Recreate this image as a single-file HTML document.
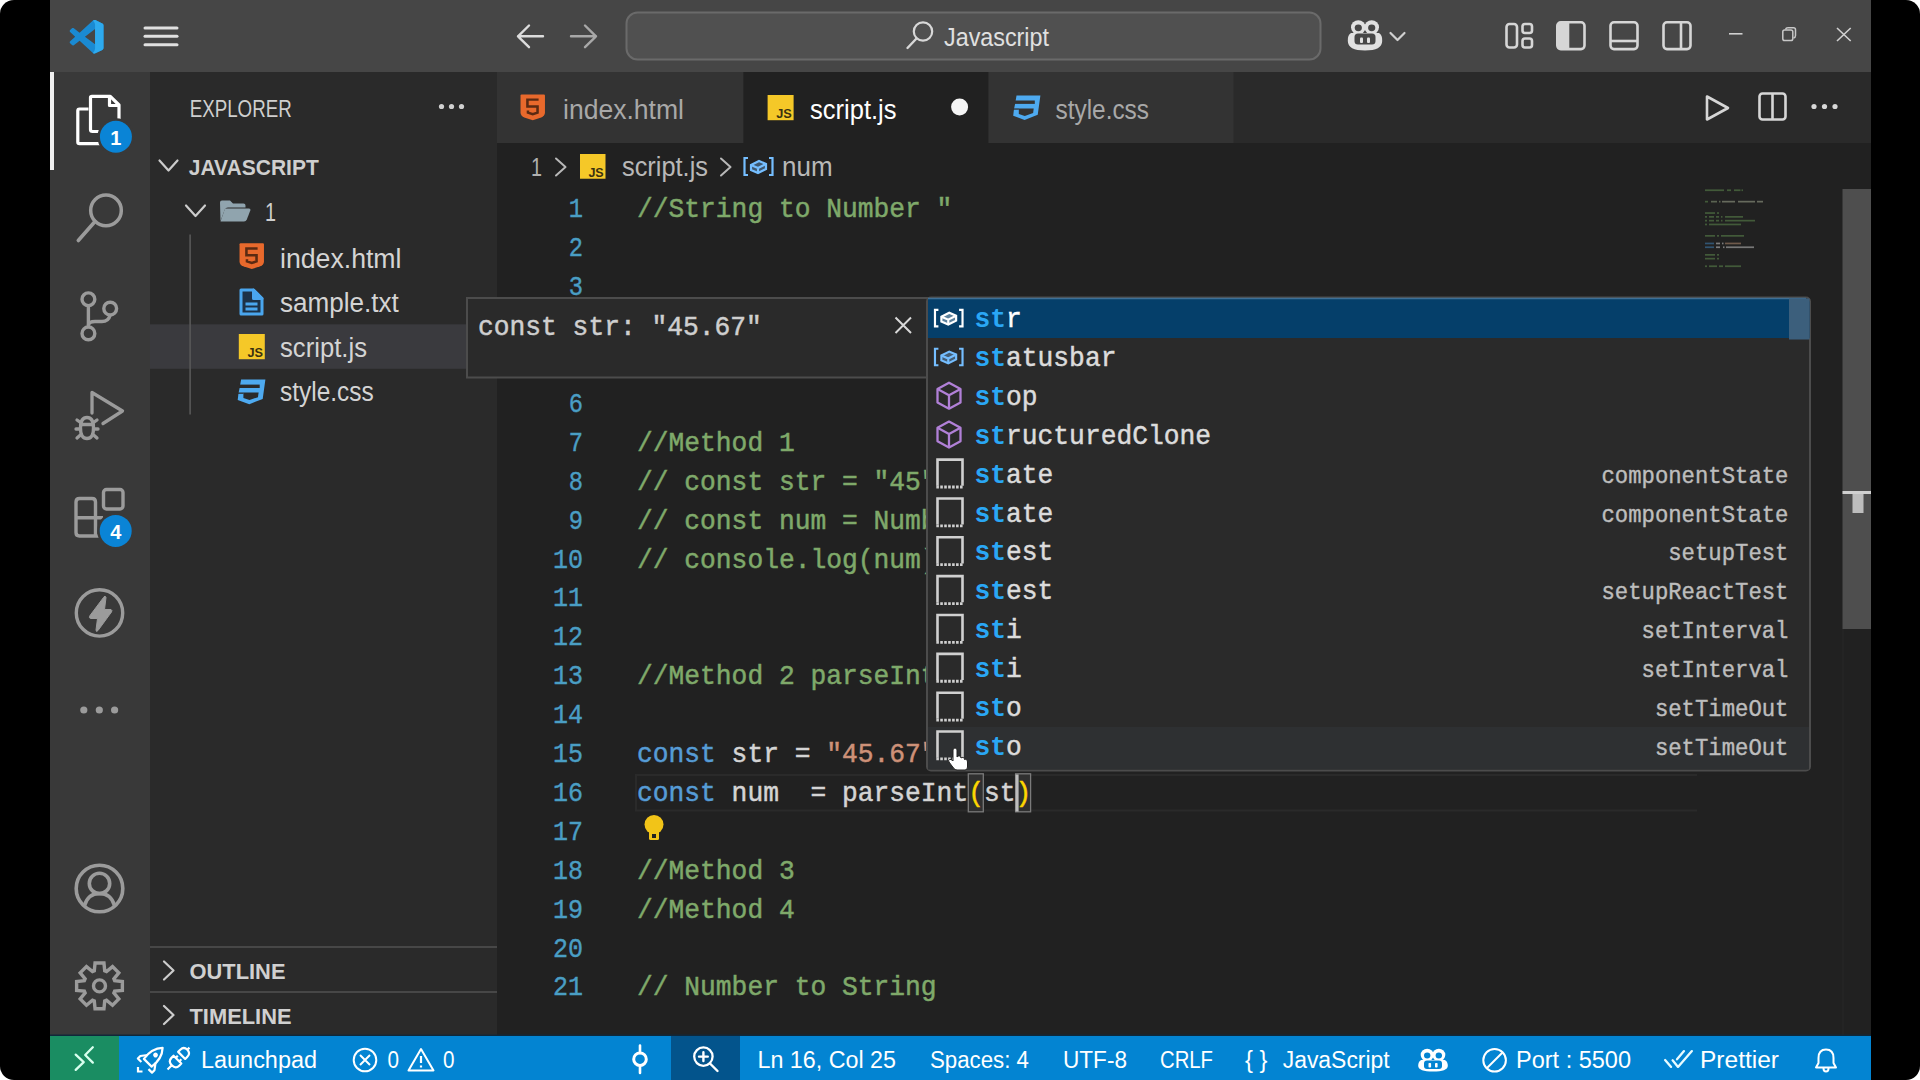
<!DOCTYPE html>
<html><head><meta charset="utf-8"><title>VS Code</title>
<style>html,body{margin:0;padding:0;background:#fff;width:1920px;height:1080px;overflow:hidden}svg{display:block}text{white-space:pre}</style>
</head><body>
<svg width="1920" height="1080" viewBox="0 0 1920 1080" xml:space="preserve">
<rect x="0" y="0" width="1920" height="1080" fill="#ffffff" />
<rect x="0" y="0" width="1920" height="1080" fill="#000000" rx="14" />
<rect x="50" y="0" width="1821" height="72" fill="#464646" />
<g transform="translate(69.7,19.8) scale(0.338)">
<path d="M96.46 10.8 L75.86 0.87 C73.48 -0.28 70.63 0.2 68.76 2.07 L29.34 38.04 L12.17 25.01 C10.57 23.79 8.33 23.89 6.85 25.25 L1.34 30.26 C-0.48 31.91 -0.48 34.77 1.33 36.42 L16.22 50 L1.33 63.58 C-0.48 65.23 -0.48 68.09 1.34 69.74 L6.85 74.75 C8.33 76.11 10.57 76.21 12.17 74.99 L29.34 61.96 L68.76 97.930 C70.63 99.8 73.48 100.28 75.86 99.13 L96.46 89.2 C98.62 88.16 100 85.96 100 83.56 V16.44 C100 14.04 98.62 11.84 96.46 10.8 Z M75.02 72.7 L45.11 50 L75.02 27.3 V72.7 Z" fill="#1a8ad2" fill-rule="evenodd"/>
<path d="M68.76 2.07 C70.63 0.2 73.48 -0.28 75.86 0.87 L96.46 10.8 C98.62 11.84 100 14.04 100 16.44 V83.56 C100 85.96 98.62 88.16 96.46 89.2 L75.86 99.13 C73.48 100.28 70.63 99.8 68.76 97.93 Q75.02 91 75.02 85 V15 Q75.02 9 68.76 2.07 Z" fill="#2eaaee"/>
</g>
<line x1="145" y1="28" x2="177" y2="28" stroke="#e0e0e0" stroke-width="3" stroke-linecap="round"/>
<line x1="145" y1="36.3" x2="177" y2="36.3" stroke="#e0e0e0" stroke-width="3" stroke-linecap="round"/>
<line x1="145" y1="44.8" x2="177" y2="44.8" stroke="#e0e0e0" stroke-width="3" stroke-linecap="round"/>
<path d="M543 36.3 H518 M529 25.5 L518 36.3 L529 47.2" fill="none" stroke="#dcdcdc" stroke-width="2.4" stroke-linecap="round" stroke-linejoin="round"/>
<path d="M571 36.3 H596 M585 25.5 L596 36.3 L585 47.2" fill="none" stroke="#a8a8a8" stroke-width="2.4" stroke-linecap="round" stroke-linejoin="round"/>
<rect x="626.5" y="12.5" width="694" height="47" rx="11" fill="#505050" stroke="#6a6a6a" stroke-width="2"/>
<circle cx="923" cy="31.5" r="9.2" fill="none" stroke="#d8d8d8" stroke-width="2.2"/>
<line x1="916.5" y1="38.5" x2="907.5" y2="48" stroke="#d8d8d8" stroke-width="2.4" stroke-linecap="round"/>
<text x="944" y="46" font-family="Liberation Sans" font-size="25" fill="#e0e0e0" textLength="105" lengthAdjust="spacingAndGlyphs" >Javascript</text>
<g>
<ellipse cx="1358.3" cy="27.3" rx="7.3" ry="7" fill="#e0e0e0"/><ellipse cx="1371.7" cy="27.3" rx="7.3" ry="7" fill="#e0e0e0"/>
<path d="M1351 33 Q1347.5 35 1347.8 41 Q1348 50.5 1365 50.5 Q1382 50.5 1382.2 41 Q1382.5 35 1379 33 Z" fill="#e0e0e0"/>
<ellipse cx="1358.3" cy="27.8" rx="3.6" ry="3.4" fill="#464646"/><ellipse cx="1371.7" cy="27.8" rx="3.6" ry="3.4" fill="#464646"/>
<rect x="1354.5" y="33.5" width="21" height="11" rx="3.5" fill="#464646"/>
<rect x="1360" y="37.5" width="3" height="5.5" rx="1" fill="#e0e0e0"/><rect x="1367" y="37.5" width="3" height="5.5" rx="1" fill="#e0e0e0"/>
</g>
<path d="M1390.5 33 L1397.5 40 L1404.5 33" fill="none" stroke="#d0d0d0" stroke-width="2.2" stroke-linecap="round" stroke-linejoin="round"/>
<rect x="1506.5" y="24" width="10.5" height="23.5" rx="3" stroke="#d6d6d6" stroke-width="2.6" fill="none"/>
<rect x="1522.5" y="24" width="9.5" height="9" rx="2.5" stroke="#d6d6d6" stroke-width="2.6" fill="none"/>
<rect x="1522.5" y="38.5" width="9.5" height="9" rx="2.5" stroke="#d6d6d6" stroke-width="2.6" fill="none"/>
<rect x="1557.3" y="22.3" width="27.2" height="26.8" rx="3.5" stroke="#d6d6d6" stroke-width="2.6" fill="none"/>
<path d="M1557.3 25.5 Q1557.3 22.3 1560.5 22.3 H1569.3 V49.1 H1560.5 Q1557.3 49.1 1557.3 46 Z" fill="#d6d6d6"/>
<rect x="1610.5" y="22.3" width="27" height="26.8" rx="3.5" stroke="#d6d6d6" stroke-width="2.6" fill="none"/>
<line x1="1610.5" y1="41" x2="1637.5" y2="41" stroke="#d6d6d6" stroke-width="2.6" fill="none"/>
<rect x="1663.5" y="22.3" width="27" height="26.8" rx="3.5" stroke="#d6d6d6" stroke-width="2.6" fill="none"/>
<line x1="1681" y1="22.3" x2="1681" y2="49.1" stroke="#d6d6d6" stroke-width="2.6" fill="none"/>
<line x1="1729" y1="33.8" x2="1742.5" y2="33.8" stroke="#d0d0d0" stroke-width="1.6"/>
<rect x="1782.8" y="30" width="10" height="10.5" rx="1.8" fill="none" stroke="#c8c8c8" stroke-width="1.5"/>
<path d="M1785.5 29.5 Q1786 27.8 1788 27.8 H1793.5 Q1795.5 27.8 1795.5 29.8 V35.5 Q1795.5 37.5 1793.5 38" fill="none" stroke="#c8c8c8" stroke-width="1.5"/>
<path d="M1837 28 L1850.7 41 M1850.7 28 L1837 41" stroke="#d0d0d0" stroke-width="1.6"/>
<rect x="50" y="72" width="100" height="964" fill="#393939" />
<rect x="50" y="72" width="4" height="98" fill="#f0f0f0" />
<g fill="none" stroke="#ffffff" stroke-width="3.2" stroke-linejoin="round">
<path d="M88.5 109 H79.5 Q77.8 109 77.8 110.8 V142 Q77.8 143.7 79.5 143.7 H101"/>
<path d="M90.5 97.5 V129.5 Q90.5 131.5 92.5 131.5 H101 M90.5 97.5 Q90.5 96.3 92 96.3 H110.3 L119 105 V121"/>
<path d="M109.5 96.5 V105.5 H118.5"/>
</g>
<circle cx="115.9" cy="136.8" r="18.5" fill="#393939"/>
<circle cx="115.9" cy="136.8" r="16" fill="#0a84d6"/>
<text x="115.9" y="144.5" font-family="Liberation Sans" font-size="20" fill="#ffffff" font-weight="bold" text-anchor="middle" >1</text>
<circle cx="106" cy="210.4" r="15.3" fill="none" stroke="#9b9b9b" stroke-width="3.5"/>
<line x1="95" y1="221.5" x2="78.3" y2="240.5" stroke="#9b9b9b" stroke-width="3.6" stroke-linecap="round"/>
<g fill="none" stroke="#9b9b9b" stroke-width="3.4">
<circle cx="88.4" cy="299.3" r="6.4"/><circle cx="110.2" cy="308.6" r="6.4"/><circle cx="88.4" cy="333.4" r="6.4"/>
<path d="M88.4 305.7 V327"/>
<path d="M88.4 325 Q89 321.5 95 321.5 H102 Q108.5 321.5 110.2 315"/>
</g>
<g fill="none" stroke="#9b9b9b" stroke-width="3.3" stroke-linejoin="round" stroke-linecap="round">
<path d="M92 413 V392.5 L122.5 411 L103 423.5"/>
<path d="M80.5 428 Q80.5 417.5 87 417.5 Q93.5 417.5 93.5 428 Q93.5 438.5 87 438.5 Q80.5 438.5 80.5 428Z"/>
<path d="M81 424.5 H93 M77 420 L80.5 422.5 M97 420 L93.5 422.5 M76 429 H80.5 M93.5 429 H98 M77 438 L81 434.5 M97 438 L93 434.5"/>
</g>
<g fill="none" stroke="#9b9b9b" stroke-width="3.4" stroke-linejoin="round">
<rect x="103.5" y="489.5" width="19.5" height="19.5" rx="3"/>
<path d="M95.5 517.8 V502 Q95.5 498.5 92 498.5 H79.5 Q76 498.5 76 502 V532.5 Q76 536 79.5 536 H102 M76 517.8 H103 M95.5 517.8 V536"/>
</g>
<circle cx="115.7" cy="530.9" r="18.5" fill="#393939"/>
<circle cx="115.7" cy="530.9" r="16" fill="#0a84d6"/>
<text x="115.7" y="538.5" font-family="Liberation Sans" font-size="20" fill="#ffffff" font-weight="bold" text-anchor="middle" >4</text>
<circle cx="99.5" cy="612.9" r="23.2" fill="none" stroke="#9b9b9b" stroke-width="3.4"/>
<path d="M103.5 597.5 Q105 594.5 106 597.5 L104.5 609.5 L111 609.5 Q112.5 610 111.5 612 L98 630.5 Q96 632.5 96 630 L97.5 618.5 L90.5 618.5 Q88.5 618 90 615.5 Z" fill="#9b9b9b" stroke="#9b9b9b" stroke-width="1" stroke-linejoin="round"/>
<circle cx="83.8" cy="710" r="3.6" fill="#9b9b9b"/>
<circle cx="99.3" cy="710" r="3.6" fill="#9b9b9b"/>
<circle cx="114.6" cy="710" r="3.6" fill="#9b9b9b"/>
<g fill="none" stroke="#9b9b9b" stroke-width="3.6">
<circle cx="99.5" cy="888.5" r="23.3"/>
<circle cx="99.5" cy="883.4" r="10.2"/>
<path d="M84.5 905.5 Q88 893.5 99.5 893.5 Q111 893.5 114.5 905.5"/>
</g>
<path d="M95.05 963.03 L103.95 963.03 L104.71 970.77 L106.51 971.52 L112.53 966.58 L118.82 972.87 L113.88 978.89 L114.63 980.69 L122.37 981.45 L122.37 990.35 L114.63 991.11 L113.88 992.91 L118.82 998.93 L112.53 1005.22 L106.51 1000.28 L104.71 1001.03 L103.95 1008.77 L95.05 1008.77 L94.29 1001.03 L92.49 1000.28 L86.47 1005.22 L80.18 998.93 L85.12 992.91 L84.37 991.11 L76.63 990.35 L76.63 981.45 L84.37 980.69 L85.12 978.89 L80.18 972.87 L86.47 966.58 L92.49 971.52 L94.29 970.77Z" fill="none" stroke="#9b9b9b" stroke-width="3.4" stroke-linejoin="miter"/>
<circle cx="99.5" cy="985.9" r="6" fill="none" stroke="#9b9b9b" stroke-width="3.4"/>
<rect x="150" y="72" width="347" height="964" fill="#2a2a2a" />
<text x="189.7" y="117.4" font-family="Liberation Sans" font-size="23.5" fill="#cfcfcf" textLength="102" lengthAdjust="spacingAndGlyphs" >EXPLORER</text>
<circle cx="441.5" cy="106.5" r="2.6" fill="#d0d0d0"/>
<circle cx="451.5" cy="106.5" r="2.6" fill="#d0d0d0"/>
<circle cx="461.5" cy="106.5" r="2.6" fill="#d0d0d0"/>
<path d="M159.5 160.5 L168.5 170.5 L177.5 160.5" fill="none" stroke="#cccccc" stroke-width="2.2" stroke-linecap="round" stroke-linejoin="round"/>
<text x="188.8" y="174.8" font-family="Liberation Sans" font-size="22.5" fill="#cfcfcf" font-weight="bold" textLength="130" lengthAdjust="spacingAndGlyphs" >JAVASCRIPT</text>
<path d="M186 205.5 L195.5 216 L205 205.5" fill="none" stroke="#cccccc" stroke-width="2.2" stroke-linecap="round" stroke-linejoin="round"/>
<path d="M220 202.5 Q220 200.5 222 200.5 H230 L233 203.5 H243.5 Q245.5 203.5 245.5 205.5 V207.5 H228 Q225.5 207.5 224.8 209.5 L220.5 221 Z" fill="#90a4ae"/>
<path d="M225 208.5 H249 Q251 208.5 250.3 210.5 L246.8 219.5 Q246 221.5 244 221.5 H220.5 Z" fill="#90a4ae"/>
<text x="265" y="221" font-family="Liberation Sans" font-size="25" fill="#cfcfcf" textLength="11" lengthAdjust="spacingAndGlyphs" >1</text>
<rect x="150" y="324.3" width="316" height="44.5" fill="#3a3a3e" />
<rect x="189.3" y="234.5" width="1.6" height="180" fill="#585858" />
<g transform="translate(239,242.8) scale(1.0625,1.0192307692307692)">
<path d="M1.5 0.5 H22.5 Q23.5 0.5 23.5 1.5 V18 Q23.5 21.5 20 23 L12 25.8 L4 23 Q0.5 21.5 0.5 18 V1.5 Q0.5 0.5 1.5 0.5 Z" fill="#e8692c"/>
<path d="M17.5 5.5 H7 V12.3 H16.5 V18.3 L12 19.8 L7.5 18.3 V16.2" fill="none" stroke="#5a2a12" stroke-width="2.4"/>
</g>
<text x="280" y="268" font-family="Liberation Sans" font-size="27" fill="#d4d4d4" textLength="121.5" lengthAdjust="spacingAndGlyphs" >index.html</text>
<g stroke="#4aa6ee" stroke-width="3" stroke-linejoin="round">
<path d="M241.0 290.0 H253.5 L262.0 298.5 V314.0 H241.0 Z" fill="#1d3248"/>
<path d="M253.5 290.0 V298.5 H262.0 Z" fill="#4aa6ee"/>
<path d="M245.5 304.0 H257.5 M245.5 309.0 H257.5" fill="none"/>
</g>
<text x="280" y="312.3" font-family="Liberation Sans" font-size="27" fill="#d4d4d4" textLength="118.8" lengthAdjust="spacingAndGlyphs" >sample.txt</text>
<rect x="238.8" y="334" width="26" height="25.22" fill="#f5c828"/>
<text x="262.98" y="357.4" font-family="Liberation Sans" font-size="13.0" fill="#3a3110" font-weight="bold" textLength="15.6" lengthAdjust="spacingAndGlyphs" text-anchor="end" >JS</text>
<text x="280" y="356.8" font-family="Liberation Sans" font-size="27" fill="#d4d4d4" textLength="87" lengthAdjust="spacingAndGlyphs" >script.js</text>
<g transform="translate(237.5,378.6) scale(1.0,1.0)">
<path d="M3.6 1 H27.9 L25.2 20.3 L11.8 25.6 L0.2 21.3 L0.9 15.2 L2.1 9.4 Z" fill="#4eaaf0"/>
<rect x="0" y="6" width="22.2" height="3.4" fill="#2a2a2a"/>
<path d="M5.9 13.9 H21.1 L20.5 18.6 L12 21.4 L5.9 19.4 Z" fill="#2a2a2a"/>
<rect x="0" y="13.9" width="6" height="1.3" fill="#2a2a2a"/>
</g>
<text x="280" y="401.3" font-family="Liberation Sans" font-size="27" fill="#d4d4d4" textLength="93.8" lengthAdjust="spacingAndGlyphs" >style.css</text>
<rect x="150" y="946" width="347" height="2" fill="#474747" />
<path d="M164 961.5 L173.5 970.5 L164 979.5" fill="none" stroke="#cccccc" stroke-width="2.2" stroke-linecap="round" stroke-linejoin="round"/>
<text x="189.5" y="979" font-family="Liberation Sans" font-size="22.5" fill="#d0d0d0" font-weight="bold" textLength="96" lengthAdjust="spacingAndGlyphs" >OUTLINE</text>
<rect x="150" y="991" width="347" height="2" fill="#474747" />
<path d="M164 1006 L173.5 1015 L164 1024" fill="none" stroke="#cccccc" stroke-width="2.2" stroke-linecap="round" stroke-linejoin="round"/>
<text x="189.5" y="1023.5" font-family="Liberation Sans" font-size="22.5" fill="#d0d0d0" font-weight="bold" textLength="102" lengthAdjust="spacingAndGlyphs" >TIMELINE</text>
<rect x="497" y="72" width="1374" height="71" fill="#2a2a2a" />
<rect x="497" y="72" width="246.5" height="71" fill="#333333" />
<rect x="743.5" y="72" width="245" height="71" fill="#212121" />
<rect x="988.5" y="72" width="245" height="71" fill="#333333" />
<g transform="translate(520,94) scale(1.0625,1.0192307692307692)">
<path d="M1.5 0.5 H22.5 Q23.5 0.5 23.5 1.5 V18 Q23.5 21.5 20 23 L12 25.8 L4 23 Q0.5 21.5 0.5 18 V1.5 Q0.5 0.5 1.5 0.5 Z" fill="#e8692c"/>
<path d="M17.5 5.5 H7 V12.3 H16.5 V18.3 L12 19.8 L7.5 18.3 V16.2" fill="none" stroke="#5a2a12" stroke-width="2.4"/>
</g>
<text x="563" y="119" font-family="Liberation Sans" font-size="27" fill="#a8a8a8" textLength="121" lengthAdjust="spacingAndGlyphs" >index.html</text>
<rect x="767.6" y="95" width="26" height="25.22" fill="#f5c828"/>
<text x="791.78" y="118.4" font-family="Liberation Sans" font-size="13.0" fill="#3a3110" font-weight="bold" textLength="15.6" lengthAdjust="spacingAndGlyphs" text-anchor="end" >JS</text>
<text x="810" y="119" font-family="Liberation Sans" font-size="27" fill="#ffffff" textLength="86.5" lengthAdjust="spacingAndGlyphs" >script.js</text>
<circle cx="959.6" cy="107" r="8.5" fill="#f5f5f5"/>
<g transform="translate(1013,94.5) scale(0.9818181818181818,1.0)">
<path d="M3.6 1 H27.9 L25.2 20.3 L11.8 25.6 L0.2 21.3 L0.9 15.2 L2.1 9.4 Z" fill="#4eaaf0"/>
<rect x="0" y="6" width="22.2" height="3.4" fill="#333333"/>
<path d="M5.9 13.9 H21.1 L20.5 18.6 L12 21.4 L5.9 19.4 Z" fill="#333333"/>
<rect x="0" y="13.9" width="6" height="1.3" fill="#333333"/>
</g>
<text x="1055.5" y="119" font-family="Liberation Sans" font-size="27" fill="#a8a8a8" textLength="93.5" lengthAdjust="spacingAndGlyphs" >style.css</text>
<path d="M1707 96.5 L1728 108 L1707 119.5 Z" fill="none" stroke="#d6d6d6" stroke-width="2.6" stroke-linejoin="round"/>
<rect x="1759.5" y="93.5" width="26" height="26" rx="3" fill="none" stroke="#d6d6d6" stroke-width="2.6"/>
<line x1="1772.5" y1="93.5" x2="1772.5" y2="119.5" stroke="#d6d6d6" stroke-width="2.6"/>
<circle cx="1814" cy="106.5" r="2.6" fill="#d8d8d8"/>
<circle cx="1824.5" cy="106.5" r="2.6" fill="#d8d8d8"/>
<circle cx="1835" cy="106.5" r="2.6" fill="#d8d8d8"/>
<rect x="497" y="143" width="1374" height="893" fill="#212121" />
<text x="531" y="176" font-family="Liberation Sans" font-size="25" fill="#b0b0b0" textLength="11" lengthAdjust="spacingAndGlyphs" >1</text>
<path d="M556 158.5 L565.5 167 L556 175.5" fill="none" stroke="#b8b8b8" stroke-width="2" stroke-linecap="round" stroke-linejoin="round"/>
<rect x="580" y="154" width="25.5" height="24.73" fill="#f5c828"/>
<text x="603.715" y="176.95" font-family="Liberation Sans" font-size="12.75" fill="#3a3110" font-weight="bold" textLength="15.299999999999999" lengthAdjust="spacingAndGlyphs" text-anchor="end" >JS</text>
<text x="622" y="176" font-family="Liberation Sans" font-size="27" fill="#b8b8b8" textLength="86" lengthAdjust="spacingAndGlyphs" >script.js</text>
<path d="M721 158.5 L730.5 167 L721 175.5" fill="none" stroke="#b8b8b8" stroke-width="2" stroke-linecap="round" stroke-linejoin="round"/>
<g transform="translate(743,156.5) scale(1.0,1.0)" fill="none" stroke="#75beff" stroke-width="2.2">
<path d="M5 1.5 H1.5 V18.5 H5"/><path d="M26 1.5 H29.5 V18.5 H26"/>
<path d="M8 8.5 L16 4.5 L23 7.5 V12.5 L15 16.5 L8 13.5 Z" fill="#75beff" fill-opacity="0.35"/>
<path d="M8 8.5 L15 11.5 L23 7.5 M15 11.5 V16.5"/>
</g>
<text x="782" y="176" font-family="Liberation Sans" font-size="27" fill="#b8b8b8" textLength="50.6" lengthAdjust="spacingAndGlyphs" >num</text>
<path d="M1697 775.0 H636 V810.5 H1697" fill="none" stroke="#2a2a2a" stroke-width="2"/>
<text x="583" y="217.4" font-family="Liberation Mono" font-size="28" fill="#4a9ec4" textLength="14.27" lengthAdjust="spacingAndGlyphs" text-anchor="end" stroke="#4a9ec4" stroke-width="0.4">1</text>
<text x="583" y="256.3" font-family="Liberation Mono" font-size="28" fill="#4a9ec4" textLength="14.27" lengthAdjust="spacingAndGlyphs" text-anchor="end" stroke="#4a9ec4" stroke-width="0.4">2</text>
<text x="583" y="295.2" font-family="Liberation Mono" font-size="28" fill="#4a9ec4" textLength="14.27" lengthAdjust="spacingAndGlyphs" text-anchor="end" stroke="#4a9ec4" stroke-width="0.4">3</text>
<text x="583" y="334.1" font-family="Liberation Mono" font-size="28" fill="#4a9ec4" textLength="14.27" lengthAdjust="spacingAndGlyphs" text-anchor="end" stroke="#4a9ec4" stroke-width="0.4">4</text>
<text x="583" y="373.0" font-family="Liberation Mono" font-size="28" fill="#4a9ec4" textLength="14.27" lengthAdjust="spacingAndGlyphs" text-anchor="end" stroke="#4a9ec4" stroke-width="0.4">5</text>
<text x="583" y="411.9" font-family="Liberation Mono" font-size="28" fill="#4a9ec4" textLength="14.27" lengthAdjust="spacingAndGlyphs" text-anchor="end" stroke="#4a9ec4" stroke-width="0.4">6</text>
<text x="583" y="450.8" font-family="Liberation Mono" font-size="28" fill="#4a9ec4" textLength="14.27" lengthAdjust="spacingAndGlyphs" text-anchor="end" stroke="#4a9ec4" stroke-width="0.4">7</text>
<text x="583" y="489.7" font-family="Liberation Mono" font-size="28" fill="#4a9ec4" textLength="14.27" lengthAdjust="spacingAndGlyphs" text-anchor="end" stroke="#4a9ec4" stroke-width="0.4">8</text>
<text x="583" y="528.6" font-family="Liberation Mono" font-size="28" fill="#4a9ec4" textLength="14.27" lengthAdjust="spacingAndGlyphs" text-anchor="end" stroke="#4a9ec4" stroke-width="0.4">9</text>
<text x="583" y="567.5" font-family="Liberation Mono" font-size="28" fill="#4a9ec4" textLength="30.04" lengthAdjust="spacingAndGlyphs" text-anchor="end" stroke="#4a9ec4" stroke-width="0.4">10</text>
<text x="583" y="606.4" font-family="Liberation Mono" font-size="28" fill="#4a9ec4" textLength="30.04" lengthAdjust="spacingAndGlyphs" text-anchor="end" stroke="#4a9ec4" stroke-width="0.4">11</text>
<text x="583" y="645.3" font-family="Liberation Mono" font-size="28" fill="#4a9ec4" textLength="30.04" lengthAdjust="spacingAndGlyphs" text-anchor="end" stroke="#4a9ec4" stroke-width="0.4">12</text>
<text x="583" y="684.2" font-family="Liberation Mono" font-size="28" fill="#4a9ec4" textLength="30.04" lengthAdjust="spacingAndGlyphs" text-anchor="end" stroke="#4a9ec4" stroke-width="0.4">13</text>
<text x="583" y="723.1" font-family="Liberation Mono" font-size="28" fill="#4a9ec4" textLength="30.04" lengthAdjust="spacingAndGlyphs" text-anchor="end" stroke="#4a9ec4" stroke-width="0.4">14</text>
<text x="583" y="762.0" font-family="Liberation Mono" font-size="28" fill="#4a9ec4" textLength="30.04" lengthAdjust="spacingAndGlyphs" text-anchor="end" stroke="#4a9ec4" stroke-width="0.4">15</text>
<text x="583" y="800.9" font-family="Liberation Mono" font-size="28" fill="#4a9ec4" textLength="30.04" lengthAdjust="spacingAndGlyphs" text-anchor="end" stroke="#4a9ec4" stroke-width="0.4">16</text>
<text x="583" y="839.8" font-family="Liberation Mono" font-size="28" fill="#4a9ec4" textLength="30.04" lengthAdjust="spacingAndGlyphs" text-anchor="end" stroke="#4a9ec4" stroke-width="0.4">17</text>
<text x="583" y="878.7" font-family="Liberation Mono" font-size="28" fill="#4a9ec4" textLength="30.04" lengthAdjust="spacingAndGlyphs" text-anchor="end" stroke="#4a9ec4" stroke-width="0.4">18</text>
<text x="583" y="917.6" font-family="Liberation Mono" font-size="28" fill="#4a9ec4" textLength="30.04" lengthAdjust="spacingAndGlyphs" text-anchor="end" stroke="#4a9ec4" stroke-width="0.4">19</text>
<text x="583" y="956.5" font-family="Liberation Mono" font-size="28" fill="#4a9ec4" textLength="30.04" lengthAdjust="spacingAndGlyphs" text-anchor="end" stroke="#4a9ec4" stroke-width="0.4">20</text>
<text x="583" y="995.4" font-family="Liberation Mono" font-size="28" fill="#4a9ec4" textLength="30.04" lengthAdjust="spacingAndGlyphs" text-anchor="end" stroke="#4a9ec4" stroke-width="0.4">21</text>
<text x="637" y="217.4" font-family="Liberation Mono" font-size="28" fill="#7fa96a" textLength="315.4" lengthAdjust="spacingAndGlyphs" stroke="#7fa96a" stroke-width="0.5">//String to Number "</text>
<text x="637" y="450.8" font-family="Liberation Mono" font-size="28" fill="#7fa96a" textLength="157.7" lengthAdjust="spacingAndGlyphs" stroke="#7fa96a" stroke-width="0.5">//Method 1</text>
<text x="637" y="489.7" font-family="Liberation Mono" font-size="28" fill="#7fa96a" textLength="299.63" lengthAdjust="spacingAndGlyphs" stroke="#7fa96a" stroke-width="0.5">// const str = "45"</text>
<text x="637" y="528.6" font-family="Liberation Mono" font-size="28" fill="#7fa96a" textLength="425.79" lengthAdjust="spacingAndGlyphs" stroke="#7fa96a" stroke-width="0.5">// const num = Number(str);</text>
<text x="637" y="567.5" font-family="Liberation Mono" font-size="28" fill="#7fa96a" textLength="315.4" lengthAdjust="spacingAndGlyphs" stroke="#7fa96a" stroke-width="0.5">// console.log(num);</text>
<text x="637" y="684.2" font-family="Liberation Mono" font-size="28" fill="#7fa96a" textLength="331.17" lengthAdjust="spacingAndGlyphs" stroke="#7fa96a" stroke-width="0.5">//Method 2 parseInt()</text>
<text x="637" y="762.0" font-family="Liberation Mono" font-size="28" fill="#569cd6" textLength="78.85" lengthAdjust="spacingAndGlyphs" stroke="#569cd6" stroke-width="0.5">const</text>
<text x="731.62" y="762.0" font-family="Liberation Mono" font-size="28" fill="#d4d4d4" textLength="47.31" lengthAdjust="spacingAndGlyphs" stroke="#d4d4d4" stroke-width="0.5">str</text>
<text x="778.93" y="762.0" font-family="Liberation Mono" font-size="28" fill="#d4d4d4" textLength="47.31" lengthAdjust="spacingAndGlyphs" stroke="#d4d4d4" stroke-width="0.5"> = </text>
<text x="826.24" y="762.0" font-family="Liberation Mono" font-size="28" fill="#ce9178" textLength="110.39" lengthAdjust="spacingAndGlyphs" stroke="#ce9178" stroke-width="0.5">"45.67"</text>
<text x="936.63" y="762.0" font-family="Liberation Mono" font-size="28" fill="#d4d4d4" textLength="15.77" lengthAdjust="spacingAndGlyphs" stroke="#d4d4d4" stroke-width="0.5">;</text>
<rect x="968.3" y="773.8" width="15" height="38" fill="#303030" stroke="#7a7a7a" stroke-width="1.3"/>
<rect x="1015.6" y="773.8" width="15" height="38" fill="#303030" stroke="#7a7a7a" stroke-width="1.3"/>
<text x="637" y="800.9" font-family="Liberation Mono" font-size="28" fill="#569cd6" textLength="78.85" lengthAdjust="spacingAndGlyphs" stroke="#569cd6" stroke-width="0.5">const</text>
<text x="731.62" y="800.9" font-family="Liberation Mono" font-size="28" fill="#d4d4d4" textLength="47.31" lengthAdjust="spacingAndGlyphs" stroke="#d4d4d4" stroke-width="0.5">num</text>
<text x="778.93" y="800.9" font-family="Liberation Mono" font-size="28" fill="#d4d4d4" textLength="63.08" lengthAdjust="spacingAndGlyphs" stroke="#d4d4d4" stroke-width="0.5">  = </text>
<text x="842.01" y="800.9" font-family="Liberation Mono" font-size="28" fill="#d4d4d4" textLength="126.16" lengthAdjust="spacingAndGlyphs" stroke="#d4d4d4" stroke-width="0.5">parseInt</text>
<text x="968.17" y="800.9" font-family="Liberation Mono" font-size="28" fill="#ffd700" textLength="15.77" lengthAdjust="spacingAndGlyphs" stroke="#ffd700" stroke-width="0.5">(</text>
<text x="983.94" y="800.9" font-family="Liberation Mono" font-size="28" fill="#d4d4d4" textLength="31.54" lengthAdjust="spacingAndGlyphs" stroke="#d4d4d4" stroke-width="0.5">st</text>
<text x="1015.48" y="800.9" font-family="Liberation Mono" font-size="28" fill="#ffd700" textLength="15.77" lengthAdjust="spacingAndGlyphs" stroke="#ffd700" stroke-width="0.5">)</text>
<rect x="1015.6" y="774.5" width="3" height="37" fill="#bdbdbd" />
<text x="637" y="878.7" font-family="Liberation Mono" font-size="28" fill="#7fa96a" textLength="157.7" lengthAdjust="spacingAndGlyphs" stroke="#7fa96a" stroke-width="0.5">//Method 3</text>
<text x="637" y="917.6" font-family="Liberation Mono" font-size="28" fill="#7fa96a" textLength="157.7" lengthAdjust="spacingAndGlyphs" stroke="#7fa96a" stroke-width="0.5">//Method 4</text>
<text x="637" y="995.4" font-family="Liberation Mono" font-size="28" fill="#7fa96a" textLength="299.63" lengthAdjust="spacingAndGlyphs" stroke="#7fa96a" stroke-width="0.5">// Number to String</text>
<g><circle cx="654" cy="824.5" r="9.5" fill="#f2c418"/><rect x="649" y="829" width="10" height="11" rx="1.5" fill="#f2c418"/><rect x="652" y="834" width="4" height="4" fill="#212121"/></g>
<rect x="467" y="298" width="461" height="79.5" fill="#2a2a2a" stroke="#4c4c4c" stroke-width="2"/>
<text x="478" y="335" font-family="Liberation Mono" font-size="28" fill="#cfcfcf" textLength="283.86" lengthAdjust="spacingAndGlyphs" stroke="#cfcfcf" stroke-width="0.5">const str: "45.67"</text>
<path d="M895.5 317.5 L911 333 M911 317.5 L895.5 333" stroke="#d8d8d8" stroke-width="2"/>
<rect x="927" y="297.5" width="883" height="473" rx="4" fill="#2a2a2a" stroke="#4c4c4c" stroke-width="2"/>
<path d="M928 338 V298.5 H1805 Q1809.5 298.5 1809.5 302.5 V338 Z" fill="#053f6a"/>
<line x1="928" y1="298.5" x2="1806" y2="298.5" stroke="#3f6f95" stroke-width="1.5"/>
<rect x="1789" y="298.5" width="20.5" height="41" fill="#3c5f7c"/>
<rect x="928" y="727" width="881" height="42.5" fill="#2e3032" />
<g transform="translate(933.5,308.4) scale(0.9838709677419355,0.975)" fill="none" stroke="#ffffff" stroke-width="2.2">
<path d="M5 1.5 H1.5 V18.5 H5"/><path d="M26 1.5 H29.5 V18.5 H26"/>
<path d="M8 8.5 L16 4.5 L23 7.5 V12.5 L15 16.5 L8 13.5 Z" fill="#ffffff" fill-opacity="0.35"/>
<path d="M8 8.5 L15 11.5 L23 7.5 M15 11.5 V16.5"/>
</g>
<text x="974.5" y="327.3" font-family="Liberation Mono" font-size="28" fill="#2aa7f5" font-weight="bold" textLength="31.54" lengthAdjust="spacingAndGlyphs" >st</text>
<text x="1006.04" y="327.3" font-family="Liberation Mono" font-size="28" fill="#ffffff" textLength="15.77" lengthAdjust="spacingAndGlyphs" stroke="#ffffff" stroke-width="0.5">r</text>
<g transform="translate(933.5,347.25) scale(0.9838709677419355,0.975)" fill="none" stroke="#75beff" stroke-width="2.2">
<path d="M5 1.5 H1.5 V18.5 H5"/><path d="M26 1.5 H29.5 V18.5 H26"/>
<path d="M8 8.5 L16 4.5 L23 7.5 V12.5 L15 16.5 L8 13.5 Z" fill="#75beff" fill-opacity="0.35"/>
<path d="M8 8.5 L15 11.5 L23 7.5 M15 11.5 V16.5"/>
</g>
<text x="974.5" y="366.15" font-family="Liberation Mono" font-size="28" fill="#2aa7f5" font-weight="bold" textLength="31.54" lengthAdjust="spacingAndGlyphs" >st</text>
<text x="1006.04" y="366.15" font-family="Liberation Mono" font-size="28" fill="#dcdcdc" textLength="110.39" lengthAdjust="spacingAndGlyphs" stroke="#dcdcdc" stroke-width="0.5">atusbar</text>
<g transform="translate(936,381.2)" fill="none" stroke="#b180d7" stroke-width="2.3" stroke-linejoin="round">
<path d="M13 1.5 L24.5 7.8 V21.2 L13 27.5 L1.5 21.2 V7.8 Z"/>
<path d="M1.5 7.8 L13 14 L24.5 7.8 M13 14 V27.5"/>
</g>
<text x="974.5" y="405.0" font-family="Liberation Mono" font-size="28" fill="#2aa7f5" font-weight="bold" textLength="31.54" lengthAdjust="spacingAndGlyphs" >st</text>
<text x="1006.04" y="405.0" font-family="Liberation Mono" font-size="28" fill="#dcdcdc" textLength="31.54" lengthAdjust="spacingAndGlyphs" stroke="#dcdcdc" stroke-width="0.5">op</text>
<g transform="translate(936,420.05)" fill="none" stroke="#b180d7" stroke-width="2.3" stroke-linejoin="round">
<path d="M13 1.5 L24.5 7.8 V21.2 L13 27.5 L1.5 21.2 V7.8 Z"/>
<path d="M1.5 7.8 L13 14 L24.5 7.8 M13 14 V27.5"/>
</g>
<text x="974.5" y="443.85" font-family="Liberation Mono" font-size="28" fill="#2aa7f5" font-weight="bold" textLength="31.54" lengthAdjust="spacingAndGlyphs" >st</text>
<text x="1006.04" y="443.85" font-family="Liberation Mono" font-size="28" fill="#dcdcdc" textLength="205.01" lengthAdjust="spacingAndGlyphs" stroke="#dcdcdc" stroke-width="0.5">ructuredClone</text>
<path d="M937.5 485.7 V459.59999999999997 H962.5 V485.7" fill="none" stroke="#d0d0d0" stroke-width="2.6"/>
<line x1="936.3" y1="487.0" x2="963.7" y2="487.0" stroke="#d0d0d0" stroke-width="2.8" stroke-dasharray="2.6 1.35"/>
<text x="974.5" y="482.7" font-family="Liberation Mono" font-size="28" fill="#2aa7f5" font-weight="bold" textLength="31.54" lengthAdjust="spacingAndGlyphs" >st</text>
<text x="1006.04" y="482.7" font-family="Liberation Mono" font-size="28" fill="#dcdcdc" textLength="47.31" lengthAdjust="spacingAndGlyphs" stroke="#dcdcdc" stroke-width="0.5">ate</text>
<text x="1788.5" y="482.7" font-family="Liberation Mono" font-size="23.8" fill="#bdbdbd" textLength="187.04" lengthAdjust="spacingAndGlyphs" text-anchor="end" stroke="#bdbdbd" stroke-width="0.4">componentState</text>
<path d="M937.5 524.55 V498.45 H962.5 V524.55" fill="none" stroke="#d0d0d0" stroke-width="2.6"/>
<line x1="936.3" y1="525.85" x2="963.7" y2="525.85" stroke="#d0d0d0" stroke-width="2.8" stroke-dasharray="2.6 1.35"/>
<text x="974.5" y="521.55" font-family="Liberation Mono" font-size="28" fill="#2aa7f5" font-weight="bold" textLength="31.54" lengthAdjust="spacingAndGlyphs" >st</text>
<text x="1006.04" y="521.55" font-family="Liberation Mono" font-size="28" fill="#dcdcdc" textLength="47.31" lengthAdjust="spacingAndGlyphs" stroke="#dcdcdc" stroke-width="0.5">ate</text>
<text x="1788.5" y="521.55" font-family="Liberation Mono" font-size="23.8" fill="#bdbdbd" textLength="187.04" lengthAdjust="spacingAndGlyphs" text-anchor="end" stroke="#bdbdbd" stroke-width="0.4">componentState</text>
<path d="M937.5 563.4 V537.3 H962.5 V563.4" fill="none" stroke="#d0d0d0" stroke-width="2.6"/>
<line x1="936.3" y1="564.6999999999999" x2="963.7" y2="564.6999999999999" stroke="#d0d0d0" stroke-width="2.8" stroke-dasharray="2.6 1.35"/>
<text x="974.5" y="560.4" font-family="Liberation Mono" font-size="28" fill="#2aa7f5" font-weight="bold" textLength="31.54" lengthAdjust="spacingAndGlyphs" >st</text>
<text x="1006.04" y="560.4" font-family="Liberation Mono" font-size="28" fill="#dcdcdc" textLength="47.31" lengthAdjust="spacingAndGlyphs" stroke="#dcdcdc" stroke-width="0.5">est</text>
<text x="1788.5" y="560.4" font-family="Liberation Mono" font-size="23.8" fill="#bdbdbd" textLength="120.24" lengthAdjust="spacingAndGlyphs" text-anchor="end" stroke="#bdbdbd" stroke-width="0.4">setupTest</text>
<path d="M937.5 602.25 V576.15 H962.5 V602.25" fill="none" stroke="#d0d0d0" stroke-width="2.6"/>
<line x1="936.3" y1="603.55" x2="963.7" y2="603.55" stroke="#d0d0d0" stroke-width="2.8" stroke-dasharray="2.6 1.35"/>
<text x="974.5" y="599.25" font-family="Liberation Mono" font-size="28" fill="#2aa7f5" font-weight="bold" textLength="31.54" lengthAdjust="spacingAndGlyphs" >st</text>
<text x="1006.04" y="599.25" font-family="Liberation Mono" font-size="28" fill="#dcdcdc" textLength="47.31" lengthAdjust="spacingAndGlyphs" stroke="#dcdcdc" stroke-width="0.5">est</text>
<text x="1788.5" y="599.25" font-family="Liberation Mono" font-size="23.8" fill="#bdbdbd" textLength="187.04" lengthAdjust="spacingAndGlyphs" text-anchor="end" stroke="#bdbdbd" stroke-width="0.4">setupReactTest</text>
<path d="M937.5 641.0999999999999 V614.9999999999999 H962.5 V641.0999999999999" fill="none" stroke="#d0d0d0" stroke-width="2.6"/>
<line x1="936.3" y1="642.3999999999999" x2="963.7" y2="642.3999999999999" stroke="#d0d0d0" stroke-width="2.8" stroke-dasharray="2.6 1.35"/>
<text x="974.5" y="638.1" font-family="Liberation Mono" font-size="28" fill="#2aa7f5" font-weight="bold" textLength="31.54" lengthAdjust="spacingAndGlyphs" >st</text>
<text x="1006.04" y="638.1" font-family="Liberation Mono" font-size="28" fill="#dcdcdc" textLength="15.77" lengthAdjust="spacingAndGlyphs" stroke="#dcdcdc" stroke-width="0.5">i</text>
<text x="1788.5" y="638.1" font-family="Liberation Mono" font-size="23.8" fill="#bdbdbd" textLength="146.96" lengthAdjust="spacingAndGlyphs" text-anchor="end" stroke="#bdbdbd" stroke-width="0.4">setInterval</text>
<path d="M937.5 679.95 V653.85 H962.5 V679.95" fill="none" stroke="#d0d0d0" stroke-width="2.6"/>
<line x1="936.3" y1="681.25" x2="963.7" y2="681.25" stroke="#d0d0d0" stroke-width="2.8" stroke-dasharray="2.6 1.35"/>
<text x="974.5" y="676.95" font-family="Liberation Mono" font-size="28" fill="#2aa7f5" font-weight="bold" textLength="31.54" lengthAdjust="spacingAndGlyphs" >st</text>
<text x="1006.04" y="676.95" font-family="Liberation Mono" font-size="28" fill="#dcdcdc" textLength="15.77" lengthAdjust="spacingAndGlyphs" stroke="#dcdcdc" stroke-width="0.5">i</text>
<text x="1788.5" y="676.95" font-family="Liberation Mono" font-size="23.8" fill="#bdbdbd" textLength="146.96" lengthAdjust="spacingAndGlyphs" text-anchor="end" stroke="#bdbdbd" stroke-width="0.4">setInterval</text>
<path d="M937.5 718.8 V692.6999999999999 H962.5 V718.8" fill="none" stroke="#d0d0d0" stroke-width="2.6"/>
<line x1="936.3" y1="720.0999999999999" x2="963.7" y2="720.0999999999999" stroke="#d0d0d0" stroke-width="2.8" stroke-dasharray="2.6 1.35"/>
<text x="974.5" y="715.8" font-family="Liberation Mono" font-size="28" fill="#2aa7f5" font-weight="bold" textLength="31.54" lengthAdjust="spacingAndGlyphs" >st</text>
<text x="1006.04" y="715.8" font-family="Liberation Mono" font-size="28" fill="#dcdcdc" textLength="15.77" lengthAdjust="spacingAndGlyphs" stroke="#dcdcdc" stroke-width="0.5">o</text>
<text x="1788.5" y="715.8" font-family="Liberation Mono" font-size="23.8" fill="#bdbdbd" textLength="133.6" lengthAdjust="spacingAndGlyphs" text-anchor="end" stroke="#bdbdbd" stroke-width="0.4">setTimeOut</text>
<path d="M937.5 757.65 V731.55 H962.5 V757.65" fill="none" stroke="#d0d0d0" stroke-width="2.6"/>
<line x1="936.3" y1="758.9499999999999" x2="963.7" y2="758.9499999999999" stroke="#d0d0d0" stroke-width="2.8" stroke-dasharray="2.6 1.35"/>
<text x="974.5" y="754.65" font-family="Liberation Mono" font-size="28" fill="#2aa7f5" font-weight="bold" textLength="31.54" lengthAdjust="spacingAndGlyphs" >st</text>
<text x="1006.04" y="754.65" font-family="Liberation Mono" font-size="28" fill="#dcdcdc" textLength="15.77" lengthAdjust="spacingAndGlyphs" stroke="#dcdcdc" stroke-width="0.5">o</text>
<text x="1788.5" y="754.65" font-family="Liberation Mono" font-size="23.8" fill="#bdbdbd" textLength="133.6" lengthAdjust="spacingAndGlyphs" text-anchor="end" stroke="#bdbdbd" stroke-width="0.4">setTimeOut</text>
<g transform="translate(948,748)">
<path d="M5 2 Q5 0 7 0 Q9 0 9 2 V9 Q10 7.5 11.5 8 Q13 8.5 13 10 Q14 9 15.3 9.5 Q16.5 10 16.5 11.5 Q17.5 11 18.5 11.7 Q19.5 12.5 19.5 14 V19 Q19.5 22 17 22 H9 Q7 22 5.5 20 L1 14 Q0 12.5 1.5 11.5 Q3 11 4.5 12.5 L5 13 Z" fill="#ffffff" stroke="#222" stroke-width="1"/>
</g>
<rect x="1705" y="189.4" width="19" height="1.7" fill="#5f8a4e" opacity="0.55"/>
<rect x="1727" y="189.4" width="4" height="1.7" fill="#5f8a4e" opacity="0.55"/>
<rect x="1734" y="189.4" width="6.5" height="1.7" fill="#5f8a4e" opacity="0.55"/>
<rect x="1741.5" y="189.4" width="1.5" height="1.7" fill="#5f8a4e" opacity="0.55"/>
<rect x="1705" y="200.8" width="3" height="1.7" fill="#5f8a4e" opacity="0.55"/>
<rect x="1711" y="200.8" width="6" height="1.7" fill="#8a9a7a" opacity="0.55"/>
<rect x="1719" y="200.8" width="1.5" height="1.7" fill="#8a9a7a" opacity="0.55"/>
<rect x="1722" y="200.8" width="13" height="1.7" fill="#a0a890" opacity="0.55"/>
<rect x="1738" y="200.8" width="17" height="1.7" fill="#a0a890" opacity="0.55"/>
<rect x="1757" y="200.8" width="6" height="1.7" fill="#a0a890" opacity="0.55"/>
<rect x="1705" y="212.2" width="10" height="1.7" fill="#5f8a4e" opacity="0.55"/>
<rect x="1717" y="212.2" width="2" height="1.7" fill="#5f8a4e" opacity="0.55"/>
<rect x="1705" y="216.0" width="2" height="1.7" fill="#5f8a4e" opacity="0.55"/>
<rect x="1709" y="216.0" width="5" height="1.7" fill="#5f8a4e" opacity="0.55"/>
<rect x="1716" y="216.0" width="3" height="1.7" fill="#5f8a4e" opacity="0.55"/>
<rect x="1721" y="216.0" width="1.5" height="1.7" fill="#5f8a4e" opacity="0.55"/>
<rect x="1725" y="216.0" width="18" height="1.7" fill="#5f8a4e" opacity="0.55"/>
<rect x="1705" y="219.8" width="2" height="1.7" fill="#5f8a4e" opacity="0.55"/>
<rect x="1709" y="219.8" width="5" height="1.7" fill="#5f8a4e" opacity="0.55"/>
<rect x="1716" y="219.8" width="3" height="1.7" fill="#5f8a4e" opacity="0.55"/>
<rect x="1721" y="219.8" width="1.5" height="1.7" fill="#5f8a4e" opacity="0.55"/>
<rect x="1725" y="219.8" width="30" height="1.7" fill="#5f8a4e" opacity="0.55"/>
<rect x="1705" y="223.6" width="2" height="1.7" fill="#5f8a4e" opacity="0.55"/>
<rect x="1709" y="223.6" width="32" height="1.7" fill="#5f8a4e" opacity="0.55"/>
<rect x="1705" y="235.0" width="10" height="1.7" fill="#5f8a4e" opacity="0.55"/>
<rect x="1717" y="235.0" width="2" height="1.7" fill="#5f8a4e" opacity="0.55"/>
<rect x="1721" y="235.0" width="23" height="1.7" fill="#5f8a4e" opacity="0.55"/>
<rect x="1705" y="242.6" width="9" height="1.7" fill="#3f7fb5" opacity="0.55"/>
<rect x="1716" y="242.6" width="4" height="1.7" fill="#c8c8c8" opacity="0.55"/>
<rect x="1722" y="242.6" width="1.5" height="1.7" fill="#c8c8c8" opacity="0.55"/>
<rect x="1725" y="242.6" width="16" height="1.7" fill="#b08a70" opacity="0.55"/>
<rect x="1705" y="246.4" width="9" height="1.7" fill="#3f7fb5" opacity="0.55"/>
<rect x="1716" y="246.4" width="4" height="1.7" fill="#c8c8c8" opacity="0.55"/>
<rect x="1723" y="246.4" width="1.5" height="1.7" fill="#c8c8c8" opacity="0.55"/>
<rect x="1726" y="246.4" width="28" height="1.7" fill="#c0c0c0" opacity="0.55"/>
<rect x="1705" y="254.0" width="10" height="1.7" fill="#5f8a4e" opacity="0.55"/>
<rect x="1717" y="254.0" width="2" height="1.7" fill="#5f8a4e" opacity="0.55"/>
<rect x="1705" y="257.8" width="10" height="1.7" fill="#5f8a4e" opacity="0.55"/>
<rect x="1717" y="257.8" width="2" height="1.7" fill="#5f8a4e" opacity="0.55"/>
<rect x="1705" y="265.4" width="2" height="1.7" fill="#5f8a4e" opacity="0.55"/>
<rect x="1709" y="265.4" width="8" height="1.7" fill="#5f8a4e" opacity="0.55"/>
<rect x="1719" y="265.4" width="4" height="1.7" fill="#5f8a4e" opacity="0.55"/>
<rect x="1725" y="265.4" width="16" height="1.7" fill="#5f8a4e" opacity="0.55"/>
<rect x="1842.5" y="189" width="28.5" height="440" fill="#4e4e4e" />
<rect x="1842.5" y="629" width="1" height="407" fill="#282828" />
<rect x="1842.5" y="491" width="28.5" height="3" fill="#d0d0d0" />
<rect x="1852.5" y="494" width="11" height="19" fill="#bdbdbd" />
<rect x="50" y="1036" width="1821" height="44" fill="#0384d2" />
<rect x="50" y="1034.5" width="1821" height="1.5" fill="#10283a" />
<rect x="50" y="1036" width="69" height="44" fill="#1a8d62" />
<path d="M75.7 1054.6 L83.7 1062.2 L75.7 1069.9 M92.8 1047.3 L85.2 1055 L92.8 1062.6" fill="none" stroke="#d8ffee" stroke-width="2.3" stroke-linecap="round" stroke-linejoin="round"/>
<g transform="translate(152,1058.5) rotate(45)" fill="none" stroke="#ffffff" stroke-width="2.2" stroke-linejoin="round">
<path d="M0 -15 Q7.5 -7 5.5 6 H-5.5 Q-7.5 -7 0 -15 Z"/>
<path d="M-5.5 0.5 L-10 6.5 V10 H-5 M5.5 0.5 L10 6.5 V10 H5"/>
<circle cx="0" cy="-5" r="2.4" fill="#ffffff" stroke="none"/>
</g>
<path d="M138 1067 V1071.5 H142.5" fill="none" stroke="#ffffff" stroke-width="2.2"/>
<g transform="translate(178.5,1058.6) rotate(45)" fill="none" stroke="#ffffff" stroke-width="2.2" stroke-linejoin="round">
<path d="M-5 -4.5 H5 V-7.5 Q5 -12.5 0 -12.5 Q-5 -12.5 -5 -7.5 Z M0 -12.5 V-15.5"/>
<path d="M-5.5 1.5 H5.5 V4.5 Q5.5 9.5 0 9.5 Q-5.5 9.5 -5.5 4.5 Z M0 9.5 V15.5 M-2.5 1.5 V-1.5 M2.5 1.5 V-1.5"/>
</g>
<text x="201" y="1068" font-family="Liberation Sans" font-size="23.5" fill="#ffffff" textLength="116" lengthAdjust="spacingAndGlyphs" >Launchpad</text>
<circle cx="365" cy="1060" r="11.3" fill="none" stroke="#ffffff" stroke-width="2"/>
<path d="M360 1055 L370 1065 M370 1055 L360 1065" stroke="#ffffff" stroke-width="2"/>
<text x="387.5" y="1068" font-family="Liberation Sans" font-size="23.5" fill="#ffffff" textLength="11.5" lengthAdjust="spacingAndGlyphs" >0</text>
<path d="M421 1049 L433.5 1070.5 H408.5 Z" fill="none" stroke="#ffffff" stroke-width="2" stroke-linejoin="round"/>
<path d="M421 1056 V1063 M421 1065.5 V1067.5" stroke="#ffffff" stroke-width="2.2"/>
<text x="443" y="1068" font-family="Liberation Sans" font-size="23.5" fill="#ffffff" textLength="11.5" lengthAdjust="spacingAndGlyphs" >0</text>
<circle cx="640" cy="1059.2" r="6.3" fill="none" stroke="#ffffff" stroke-width="3"/>
<path d="M640 1045.5 V1053 M640 1065.5 V1073" stroke="#ffffff" stroke-width="2.6" stroke-linecap="round"/>
<rect x="671" y="1036" width="69" height="44" fill="#03548c" />
<circle cx="703.4" cy="1056.6" r="9.2" fill="none" stroke="#ffffff" stroke-width="2.3"/>
<path d="M699 1056.6 H707.8 M703.4 1052.2 V1061 M710 1063.5 L717.5 1071" stroke="#ffffff" stroke-width="2.4" stroke-linecap="round"/>
<text x="757.5" y="1068.2" font-family="Liberation Sans" font-size="23.5" fill="#ffffff" textLength="138.5" lengthAdjust="spacingAndGlyphs" >Ln 16, Col 25</text>
<text x="930" y="1068.2" font-family="Liberation Sans" font-size="23.5" fill="#ffffff" textLength="99" lengthAdjust="spacingAndGlyphs" >Spaces: 4</text>
<text x="1063" y="1068.2" font-family="Liberation Sans" font-size="23.5" fill="#ffffff" textLength="64" lengthAdjust="spacingAndGlyphs" >UTF-8</text>
<text x="1160" y="1068.2" font-family="Liberation Sans" font-size="23.5" fill="#ffffff" textLength="53" lengthAdjust="spacingAndGlyphs" >CRLF</text>
<text x="1245" y="1068.2" font-family="Liberation Sans" font-size="23.5" fill="#ffffff" textLength="22.5" lengthAdjust="spacingAndGlyphs" >{ }</text>
<text x="1282.7" y="1068.2" font-family="Liberation Sans" font-size="23.5" fill="#ffffff" textLength="107" lengthAdjust="spacingAndGlyphs" >JavaScript</text>
<g>
<ellipse cx="1427.2" cy="1055" rx="6.5" ry="6.2" fill="#ffffff"/><ellipse cx="1438.8" cy="1055" rx="6.5" ry="6.2" fill="#ffffff"/>
<path d="M1421 1060 Q1418 1062 1418.2 1066 Q1418.5 1071.5 1433 1071.5 Q1447.5 1071.5 1447.8 1066 Q1448 1062 1445 1060 Z" fill="#ffffff"/>
<ellipse cx="1427.2" cy="1055.5" rx="3.2" ry="3" fill="#0384d2"/><ellipse cx="1438.8" cy="1055.5" rx="3.2" ry="3" fill="#0384d2"/>
<rect x="1424" y="1060.5" width="18" height="8.5" rx="3" fill="#0384d2"/>
<rect x="1428.5" y="1063" width="2.6" height="4.5" rx="0.8" fill="#ffffff"/><rect x="1435" y="1063" width="2.6" height="4.5" rx="0.8" fill="#ffffff"/>
</g>
<circle cx="1494.6" cy="1060.2" r="11.3" fill="none" stroke="#ffffff" stroke-width="2"/>
<path d="M1487 1068 L1502.5 1052.5" stroke="#ffffff" stroke-width="2"/>
<text x="1516" y="1068.2" font-family="Liberation Sans" font-size="23.5" fill="#ffffff" textLength="115" lengthAdjust="spacingAndGlyphs" >Port : 5500</text>
<path d="M1665.1 1060 L1671.1 1066.9 M1672.6 1060.3 L1678 1066.9 L1691.9 1051.1 M1677 1059.3 L1684 1051.1" fill="none" stroke="#e8fbff" stroke-width="2.3" stroke-linecap="round" stroke-linejoin="round"/>
<text x="1700" y="1068.2" font-family="Liberation Sans" font-size="23.5" fill="#ffffff" textLength="79" lengthAdjust="spacingAndGlyphs" >Prettier</text>
<path d="M1816 1067.5 H1836 L1833.5 1063 V1058 Q1833.5 1049.5 1826 1049.5 Q1818.5 1049.5 1818.5 1058 V1063 Z M1823.5 1068.5 Q1823.5 1071.5 1826 1071.5 Q1828.5 1071.5 1828.5 1068.5" fill="none" stroke="#ffffff" stroke-width="2" stroke-linejoin="round"/>
</svg>
</body></html>
